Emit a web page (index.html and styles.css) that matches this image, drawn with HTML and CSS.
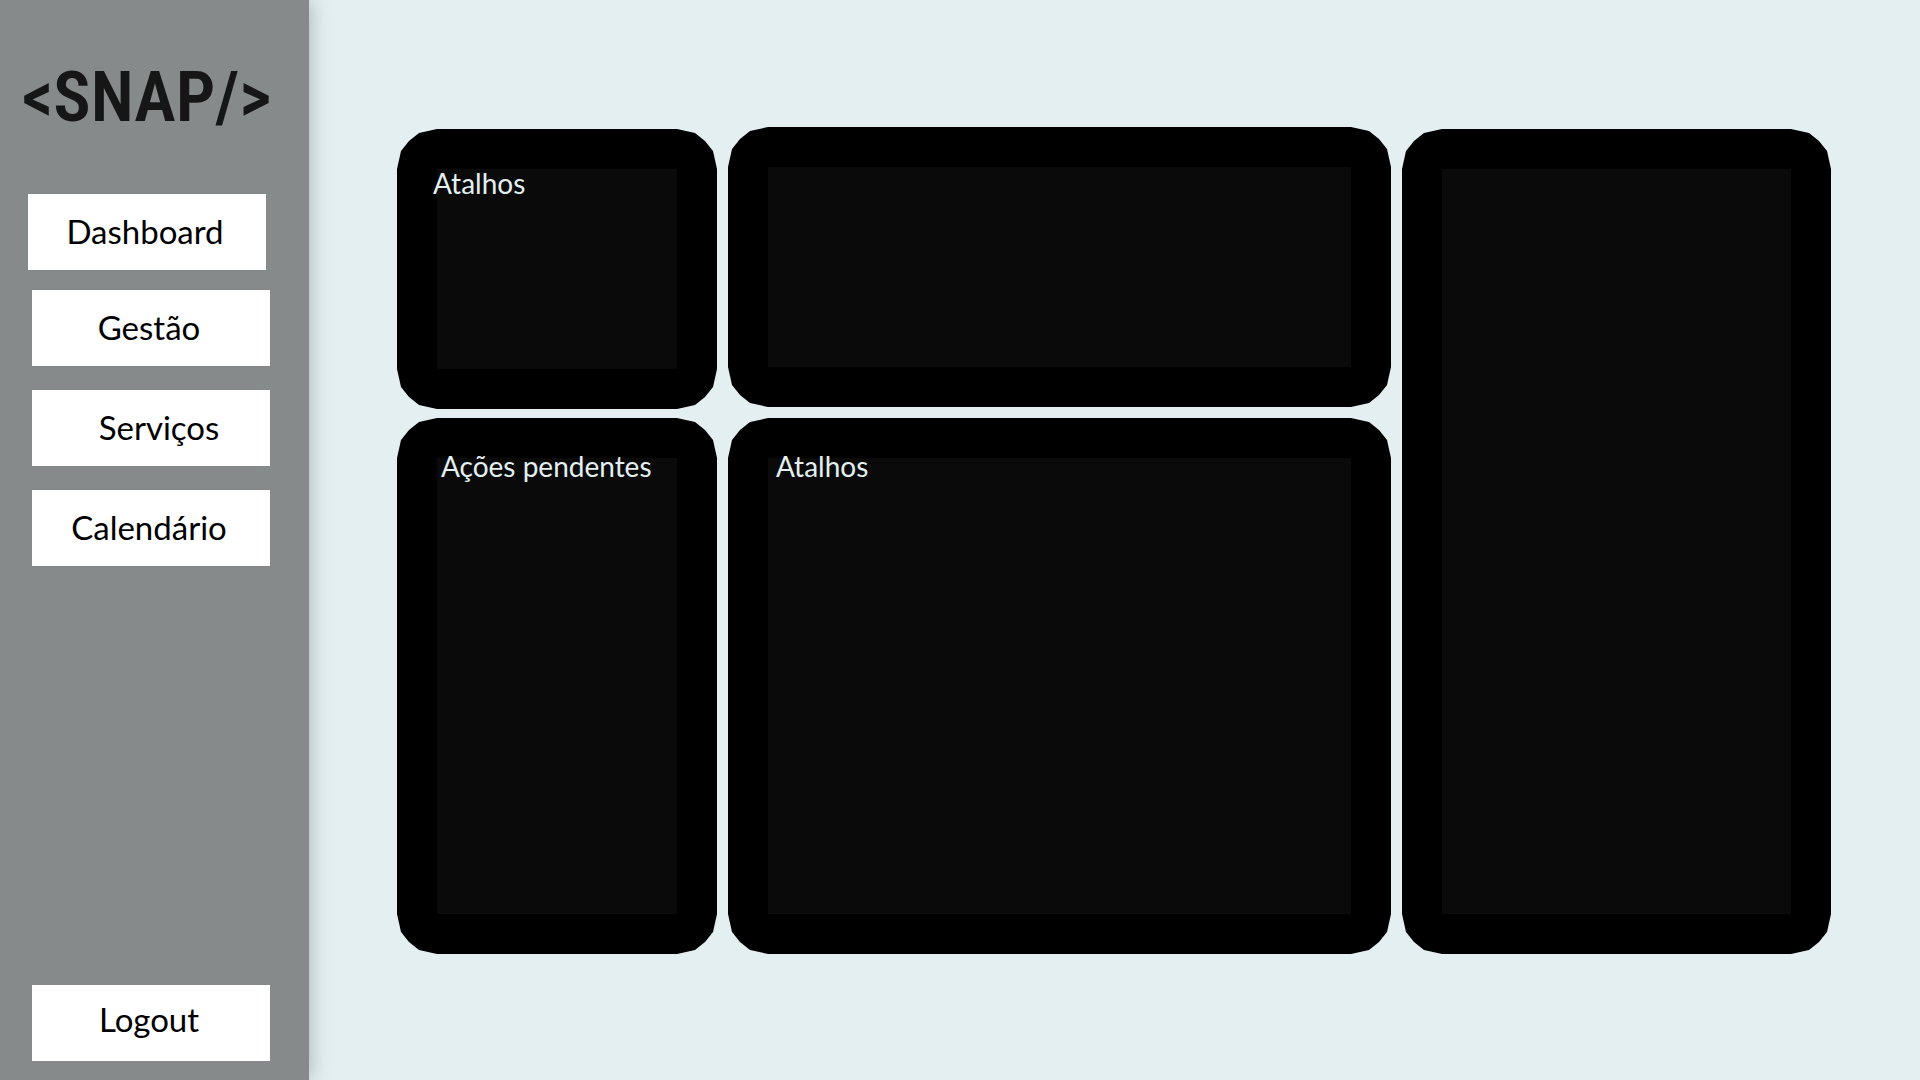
FILE: index.html
```html
<!DOCTYPE html>
<html lang="pt">
<head>
  <meta charset="utf-8">
  <meta name="viewport" content="width=device-width, initial-scale=1">
  <title>Snap – Dashboard</title>
  <link rel="stylesheet" href="styles.css">
</head>
<body>
  <div class="app">
    <aside class="sidebar">
      <a class="logo" href="#">&lt;SNAP/&gt;</a>
      <div class="home">
        <button class="button" type="button">Dashboard</button>
      </div>
      <nav class="menu">
        <button class="button" type="button">Gestão</button>
        <button class="button button-indented" type="button">Serviços</button>
        <button class="button" type="button">Calendário</button>
      </nav>
      <div class="session">
        <button class="button" type="button">Logout</button>
      </div>
    </aside>
    <main class="board">
      <div class="column column-tight">
        <section class="card card-short"><div class="card-panel"></div><h2 class="card-title">Atalhos</h2></section>
        <section class="card card-long"><div class="card-panel"></div><h2 class="card-title">Ações pendentes</h2></section>
      </div>
      <div class="column">
        <section class="card card-short"><div class="card-panel"></div></section>
        <section class="card card-long"><div class="card-panel"></div><h2 class="card-title">Atalhos</h2></section>
      </div>
      <div class="column">
        <section class="card card-full"><div class="card-panel"></div></section>
      </div>
    </main>
  </div>
</body>
</html>
```
FILE: styles.css
```css
* {
  box-sizing: border-box;
}

body {
  margin: 0;
  background: #e4eff1;
  color: #000;
  font-family: Lato, "Noto Sans", sans-serif;
}

.app {
  display: grid;
  grid-template-columns: 309px minmax(0, 1fr);
  min-height: 100vh;
}

/* Sidebar */
.sidebar {
  display: flex;
  flex-direction: column;
  padding: 57px 0 19px;
  background: #878a8a;
  box-shadow: 0 0 20px rgba(60, 80, 80, 0.4);
}

.logo {
  padding-left: 22px;
  color: #161616;
  font-family: "Roboto Condensed", "Liberation Sans Narrow", sans-serif;
  font-size: 70px;
  font-weight: 600;
  line-height: 80px;
  text-decoration: none;
  white-space: nowrap;
}

.home {
  padding: 57px 0 0 28px;
}

.menu {
  display: flex;
  flex-direction: column;
  gap: 24px;
  padding: 20px 0 0 32px;
}

.session {
  margin-top: auto;
  padding: 24px 0 0 32px;
}

.button {
  display: block;
  width: 238px;
  height: 76px;
  padding: 0 4px 2px 0;
  border: 0;
  background: #fff;
  color: #000;
  font-family: inherit;
  font-size: 33px;
  line-height: 44px;
  text-align: center;
  cursor: pointer;
}

.button-indented {
  padding: 0 0 2px 16px;
}

.session .button {
  padding-bottom: 8px;
}

/* Board */
.board {
  display: grid;
  grid-template-columns: 320fr 663fr 429fr;
  gap: 11px;
  align-content: start;
  align-items: end;
  padding: 127px 89px 60px 88px;
}

.column {
  display: flex;
  flex-direction: column;
  gap: 11px;
}

.column-tight {
  gap: 9px;
}

.card {
  display: grid;
  padding: 40px;
  background: #000;
  color: #e4eff1;
  clip-path: polygon(
    0 40px, 4px 22px, 12px 12px, 22px 4px, 40px 0,
    calc(100% - 40px) 0, calc(100% - 22px) 4px, calc(100% - 12px) 12px, calc(100% - 4px) 22px, 100% 40px,
    100% calc(100% - 40px), calc(100% - 4px) calc(100% - 22px), calc(100% - 12px) calc(100% - 12px), calc(100% - 22px) calc(100% - 4px), calc(100% - 40px) 100%,
    40px 100%, 22px calc(100% - 4px), 12px calc(100% - 12px), 4px calc(100% - 22px), 0 calc(100% - 40px)
  );
}

.card-short {
  min-height: 280px;
}

.card-long {
  min-height: 536px;
}

.card-full {
  min-height: 825px;
}

.card-panel,
.card-title {
  grid-area: 1 / 1;
}

.card-panel {
  background: #0a0a0a;
}

.card-title {
  align-self: start;
  margin: -10px 0 0 8px;
  font-size: 28px;
  font-weight: 400;
  line-height: 36px;
}

.column-tight .card-title {
  margin-left: 4px;
}

.card-short .card-title {
  margin: -4px 0 0 -4px;
}
```
